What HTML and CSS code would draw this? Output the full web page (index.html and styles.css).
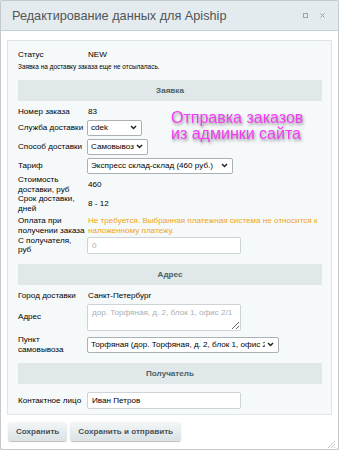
FILE: index.html
```html
<!DOCTYPE html>
<html lang="ru">
<head>
<meta charset="utf-8">
<title>Apiship</title>
<link rel="stylesheet" href="styles.css">
</head>
<body>
<div class="dialog">
  <div class="titlebar">
    <span class="title">Редактирование данных для Apiship</span>
    <span class="tools">
      <span class="maxbtn"></span>
      <svg class="closebtn" width="5" height="5" viewBox="0 0 5 5"><path d="M0.5 0.5L4.5 4.5M4.5 0.5L0.5 4.5" stroke="#9aa3a7" stroke-width="1"/></svg>
    </span>
  </div>
  <div class="body">
    <div class="frame">
      <div class="content">
        <div class="status"><span class="label">Статус</span><span class="value">NEW</span></div>
        <div class="note">Заявка на доставку заказа еще не отсылалась.</div>

        <div class="section">Заявка</div>
        <div class="row first"><span class="label">Номер заказа</span><span class="value">83</span></div>
        <div class="row"><span class="label">Служба доставки</span><select class="sel w-cdek"><option>cdek</option></select></div>
        <div class="row"><span class="label">Способ доставки</span><select class="sel w-way"><option>Самовывоз</option></select></div>
        <div class="row"><span class="label">Тариф</span><select class="sel w-tarif"><option>Экспресс склад-склад (460 руб.)</option></select></div>
        <div class="row"><span class="label">Стоимость доставки, руб</span><span class="value">460</span></div>
        <div class="row"><span class="label">Срок доставки, дней</span><span class="value">8 - 12</span></div>
        <div class="row spaced"><span class="label">Оплата при получении заказа</span><span class="value warn">Не требуется. Выбранная платежная система не относится к наложенному платежу.</span></div>
        <div class="row"><span class="label">С получателя,<br>руб</span><input class="inp" type="text" placeholder="0"></div>

        <div class="section">Адрес</div>
        <div class="row first"><span class="label">Город доставки</span><span class="value">Санкт-Петербург</span></div>
        <div class="row"><span class="label">Адрес</span><textarea class="area" placeholder="дор. Торфяная, д. 2, блок 1, офис 2/1"></textarea></div>
        <div class="row spaced"><span class="label">Пункт самовывоза</span><select class="sel w-point"><option>Торфяная (дор. Торфяная, д. 2, блок 1, офис 2/1)</option></select></div>

        <div class="section">Получатель</div>
        <div class="row first-ctl"><span class="label">Контактное лицо</span><input class="inp" type="text" value="Иван Петров"></div>
      </div>
    </div>
    <div class="promo">Отправка заказов<br>из админки сайта</div>
  </div>
  <div class="buttons">
    <button class="btn">Сохранить</button>
    <button class="btn">Сохранить и отправить</button>
  </div>
  <svg class="grip" width="8" height="8" viewBox="0 0 8 8"><path d="M8 1L1 8M8 4L4 8M8 7L7 8" stroke="#c4c9cc" stroke-width="1"/></svg>
</div>
</body>
</html>
```

FILE: styles.css
```css
html, body {
  margin: 0;
  padding: 0;
  background: #d8dcde;
}
body {
  font-family: "Liberation Sans", Arial, sans-serif;
  color: #000;
}
.dialog {
  position: relative;
  box-sizing: border-box;
  width: 339px;
  height: 450px;
  background: #fff;
  border: 1px solid #c3c9cc;
  border-radius: 3px;
  display: flex;
  flex-direction: column;
  overflow: hidden;
}
.titlebar {
  height: 29px;
  flex: none;
  background: #e4ebee;
  border-bottom: 1px solid #c8d0d3;
  display: flex;
  align-items: center;
  justify-content: space-between;
  padding: 0 13px 0 11px;
}
.title {
  font-size: 12.7px;
  color: #4f5659;
}
.tools {
  display: flex;
  align-items: center;
  gap: 12px;
}
.maxbtn {
  display: block;
  width: 3px;
  height: 3px;
  border: 1px solid #9aa3a7;
}
.closebtn { display: block; }
.body {
  position: relative;
  flex: none;
  padding: 9px 6px 0 6px;
}
.frame {
  height: 373px;
  border: 1px solid #dfe4e6;
  background: #f5f9fa;
  overflow-y: scroll;
}
.frame::-webkit-scrollbar { width: 10px; }
.frame::-webkit-scrollbar-track { background: #f0f0f0; }
.frame::-webkit-scrollbar-thumb { background: #c1c1c1; border: 1px solid #f0f0f0; }
.frame::-webkit-scrollbar-button:single-button:vertical:decrement {
  height: 10px;
  background: #f0f0f0 url("data:image/svg+xml;utf8,<svg xmlns='http://www.w3.org/2000/svg' width='10' height='10'><path d='M3 6h4L5 4z' fill='%23a8a8a8'/></svg>") no-repeat center;
}
.frame::-webkit-scrollbar-button:single-button:vertical:increment {
  height: 10px;
  background: #f0f0f0 url("data:image/svg+xml;utf8,<svg xmlns='http://www.w3.org/2000/svg' width='10' height='10'><path d='M3 4h4L5 6z' fill='%23505050'/></svg>") no-repeat center;
}
.content {
  padding: 9px 9px 240px 10px;
  font-size: 8.1px;
  line-height: 9.5px;
  color: #000;
}
.status {
  display: grid;
  grid-template-columns: 69px 1fr;
  line-height: 10px;
}
.note {
  font-size: 6.45px;
  line-height: 8px;
  margin-top: 3px;
  color: #000;
}
.row {
  display: grid;
  grid-template-columns: 69px 1fr;
  align-items: center;
  min-height: 13px;
}
.row.first { margin-top: 4.5px; }
.row.first-ctl { margin-top: 7px; }
.row.spaced { margin-top: 3px; }
.label { color: #000; }
.value { padding-left: 1px; }
.warn { color: #f0a420; }
.section {
  margin-top: 8.5px;
  height: 21px;
  line-height: 21px;
  background: #e0e8ea;
  text-align: center;
  font-weight: bold;
  color: #4b6267;
  font-size: 8.1px;
}
.sel {
  appearance: none;
  -webkit-appearance: none;
  box-sizing: border-box;
  font-family: "Liberation Sans", Arial, sans-serif;
  font-size: 8.1px;
  height: 16px;
  padding: 0 13px 0 3px;
  border: 1px solid #a9b1b5;
  border-radius: 2px;
  background: #fff url("data:image/svg+xml;utf8,<svg xmlns='http://www.w3.org/2000/svg' width='7' height='5'><path d='M1 1l2.5 2.5L6 1' fill='none' stroke='%23222' stroke-width='1.5'/></svg>") no-repeat right 4px center;
  color: #000;
  margin: 1.5px 0;
  white-space: nowrap;
  overflow: hidden;
  text-overflow: clip;
}
.w-cdek { width: 55px; }
.w-way { width: 61px; }
.w-tarif { width: 146px; }
.w-point { width: 192px; }
.inp {
  box-sizing: border-box;
  width: 154px;
  height: 17px;
  border: 1px solid #cdd4d7;
  border-radius: 2px;
  background: #fff;
  font-family: "Liberation Sans", Arial, sans-serif;
  font-size: 8.1px;
  padding: 0 4px;
  margin: 1.5px 0;
  color: #000;
}
.inp::placeholder, .area::placeholder { color: #a9b0b3; }
.area {
  box-sizing: border-box;
  width: 154px;
  height: 27px;
  border: 1px solid #cdd4d7;
  border-radius: 2px;
  background: #fff;
  font-family: "Liberation Sans", Arial, sans-serif;
  font-size: 8.1px;
  line-height: 9.5px;
  padding: 3px 4px;
  margin: 1.5px 0;
  resize: vertical;
}
.promo {
  position: absolute;
  left: 170px;
  top: 79px;
  font-size: 16px;
  line-height: 16px;
  color: #f23cf2;
  text-shadow: 1px 2px 3px rgba(60, 40, 60, 0.55);
}
.buttons {
  display: flex;
  gap: 3px;
  padding: 6px 0 0 7px;
}
.btn {
  height: 20px;
  border: none;
  border-radius: 3px;
  background: linear-gradient(#f4f7f8, #dbe2e4);
  box-shadow: 0 1px 1px rgba(0, 0, 0, 0.25), inset 0 1px 0 #fff;
  font-family: "Liberation Sans", Arial, sans-serif;
  font-size: 8.1px;
  font-weight: bold;
  color: #47525b;
  padding: 0 8px;
}
.grip {
  position: absolute;
  right: 3px;
  bottom: 1px;
}
```
